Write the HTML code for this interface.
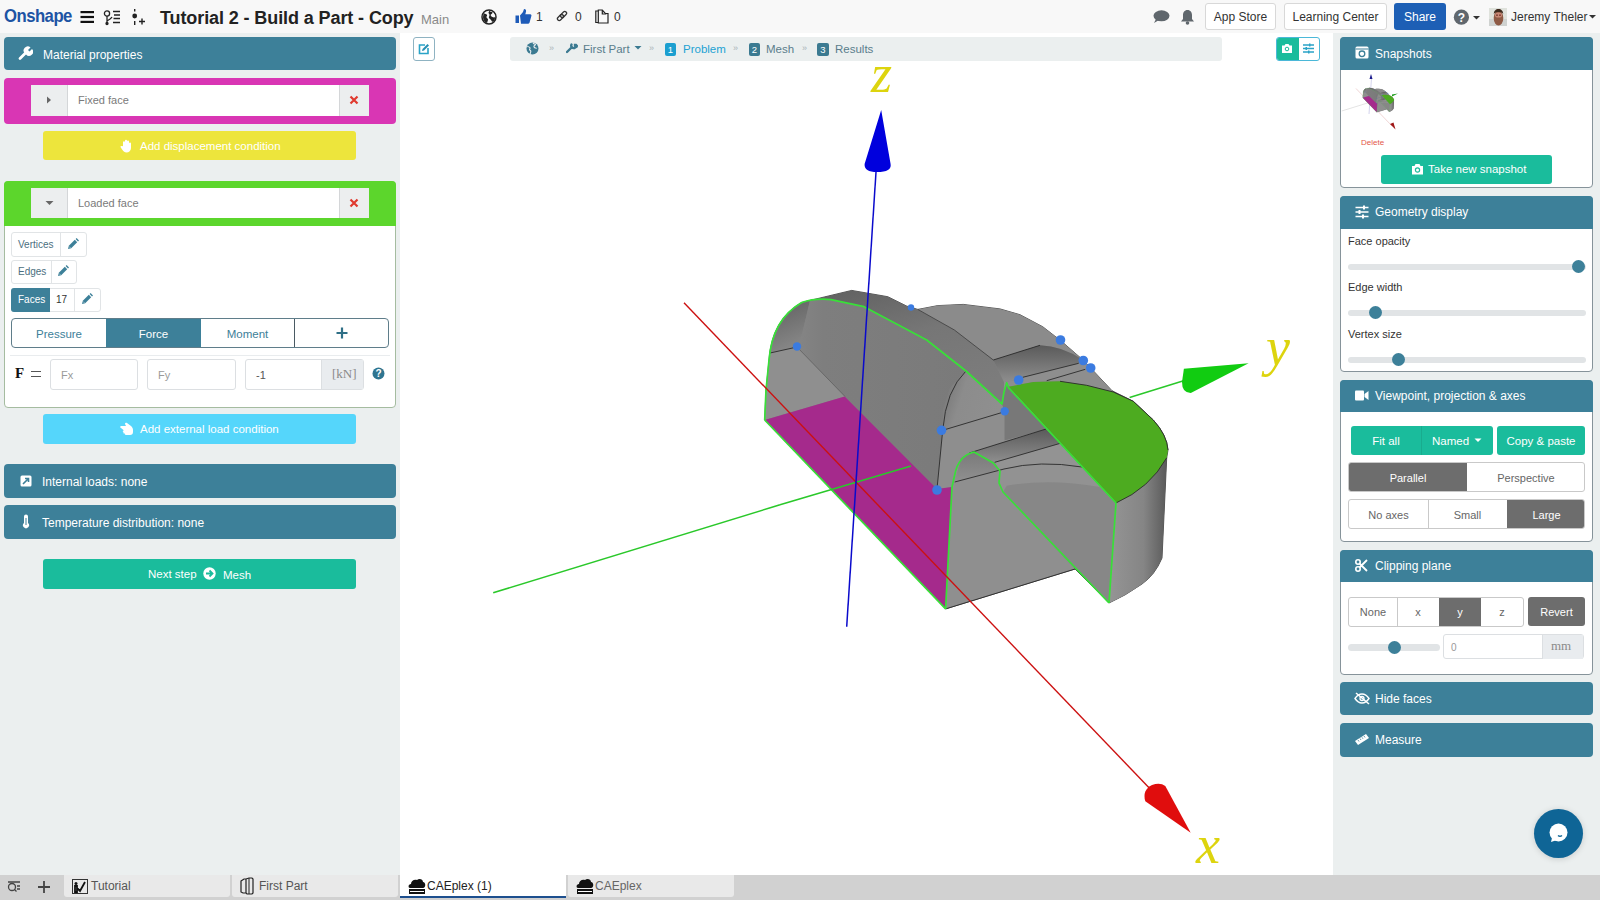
<!DOCTYPE html>
<html><head><meta charset="utf-8">
<style>
*{box-sizing:border-box;margin:0;padding:0}
html,body{width:1600px;height:900px;overflow:hidden;background:#fff;font-family:"Liberation Sans",sans-serif;position:relative}
.a{position:absolute}
#hdr{left:0;top:0;width:1600px;height:33px;background:#f8f8f8}
#left{left:0;top:33px;width:400px;height:842px;background:#ebefef}
#view{left:400px;top:33px;width:933px;height:842px;background:#fff}
#right{left:1333px;top:33px;width:267px;height:842px;background:#ebefef}
#tabs{left:0;top:875px;width:1600px;height:25px;background:#d1d1d1}
.ph{position:absolute;background:#3d8099;border-radius:4px;color:#fff;font-size:12px;white-space:nowrap}
.ph .t{position:absolute;left:38px;top:10px}
.ico{position:absolute}
.btn{position:absolute;border-radius:3px;color:#fff;font-size:11.5px;text-align:center;white-space:nowrap}
.t{white-space:nowrap}
</style></head><body>
<div id="hdr" class="a"></div>
<div id="left" class="a"></div>
<div id="view" class="a"></div>
<div id="right" class="a"></div>
<div id="tabs" class="a"></div>

<!-- HEADER -->
<div class="a t" style="left:4px;top:5px;font-size:19px;font-weight:bold;color:#1d54a4;letter-spacing:-0.6px;transform:scaleX(0.88);transform-origin:0 0">Onshape</div>
<svg class="a" style="left:80px;top:10px" width="15" height="14"><rect x="0.5" y="1" width="13.5" height="2.2" fill="#111"/><rect x="0.5" y="5.9" width="13.5" height="2.2" fill="#111"/><rect x="0.5" y="10.8" width="13.5" height="2.2" fill="#111"/></svg>
<svg class="a" style="left:103px;top:9px" width="20" height="17" fill="none" stroke="#222" stroke-width="1.3"><circle cx="4" cy="4.5" r="2.6"/><path d="M4 7v7M4 12c2-1 4-2 5-4"/><circle cx="4" cy="14.5" r="1" fill="#222"/><path d="M10 2.5h7M11 6h6M10.5 9.5h6.5M10 13.5h7"/></svg>
<svg class="a" style="left:131px;top:9px" width="16" height="17"><rect x="3" y="0" width="1.4" height="2.5" fill="#222"/><rect x="3" y="12" width="1.4" height="4" fill="#222"/><circle cx="3.7" cy="7" r="2.4" fill="#222"/><path d="M8 12.5h6M11 9.5v6" stroke="#222" stroke-width="1.4"/></svg>
<div class="a t" style="left:160px;top:8px;font-size:18px;font-weight:bold;color:#222;letter-spacing:-0.1px">Tutorial 2 - Build a Part - Copy</div>
<div class="a t" style="left:421px;top:12px;font-size:13px;color:#8a8a8a">Main</div>
<svg class="a" style="left:481px;top:9px" width="16" height="16"><circle cx="8" cy="8" r="7" fill="none" stroke="#222" stroke-width="1.5"/><path d="M2.5 4.5c1.5 0 3 .5 3.5 1.5s-1 1.5-.5 2.5 1.5 1 1.5 2-.5 2-1 3.5L4 13c-1-1-2-3-2-5zM8.5 1.5c.5 1 1.5 1.5 2.5 1.5s.5 1.5-.5 2-1 1-.5 2 2 1 3 1.5c.5-.5 1 0 1 0 0 2-.5 3-1.5 4s-2-.5-2.5-1.5-1.5-1-2-2 .5-2 .5-3-1-1.5-1-2.5z" fill="#222"/></svg>
<svg class="a" style="left:515px;top:9px" width="17" height="15"><path d="M0.5 6.5h3.5v7.5h-3.5zM5 6.5l3-3.5 1-3c2 0 2.5 1.5 1.8 3.5l-0.5 1.8h5c1 0 1.5 1 1 2l-1.8 6.5c-0.3 0.7-0.8 1-1.5 1h-7z" fill="#1e5bb8"/></svg>
<div class="a t" style="left:536px;top:10px;font-size:12px;color:#333">1</div>
<svg class="a" style="left:556px;top:10px" width="12" height="12" fill="none" stroke="#333" stroke-width="1.3"><rect x="0.3" y="4.2" width="7" height="3.6" rx="1.8" transform="rotate(-45 6 6)"/><rect x="4.7" y="4.2" width="7" height="3.6" rx="1.8" transform="rotate(-45 6 6)"/></svg>
<div class="a t" style="left:575px;top:10px;font-size:12px;color:#333">0</div>
<svg class="a" style="left:595px;top:9px" width="14" height="15" fill="none" stroke="#222" stroke-width="1.2"><path d="M0.8 13.5V2h2.5v11.5zM3.3 1h4l3 3.5H13V14H3.3z"/><path d="M7.3 1v4h4"/></svg>
<div class="a t" style="left:614px;top:10px;font-size:12px;color:#333">0</div>

<svg class="a" style="left:1153px;top:10px" width="17" height="14"><ellipse cx="8.5" cy="5.8" rx="8" ry="5.5" fill="#60676d"/><path d="M3 9l-2 4 5-3z" fill="#60676d"/></svg>
<svg class="a" style="left:1180px;top:9px" width="15" height="16"><path d="M7.5 1c-3 0-4.5 2.5-4.5 5v4l-2 2.5h13L12 10V6c0-2.5-1.5-5-4.5-5z" fill="#60676d"/><circle cx="7.5" cy="14" r="1.8" fill="#60676d"/></svg>
<div class="a t" style="left:1205px;top:3px;width:71px;height:27px;border:1px solid #d8d8d8;border-radius:3px;background:#fff;font-size:12px;color:#333;text-align:center;line-height:27px">App Store</div>
<div class="a t" style="left:1284px;top:3px;width:103px;height:27px;border:1px solid #d8d8d8;border-radius:3px;background:#fff;font-size:12px;color:#333;text-align:center;line-height:27px">Learning Center</div>
<div class="a t" style="left:1394px;top:3px;width:52px;height:27px;border-radius:3px;background:#1d5fb5;font-size:12px;color:#fff;text-align:center;line-height:28px">Share</div>
<svg class="a" style="left:1453px;top:9px" width="30" height="17"><circle cx="8.4" cy="8.2" r="7.6" fill="#60676d"/><text x="8.4" y="12.5" font-size="12" font-weight="bold" fill="#fff" text-anchor="middle" font-family="Liberation Sans">?</text><path d="M20 7h7l-3.5 3.5z" fill="#333"/></svg>
<svg class="a" style="left:1489px;top:8px" width="18" height="18"><rect width="18" height="18" fill="#dfe2dc"/><rect y="11" width="18" height="7" fill="#cfd2d0"/><ellipse cx="9.5" cy="10" rx="4.8" ry="7.5" fill="#8e5a45"/><path d="M4.8 6c0-3 2-5 4.7-5s4.7 2 4.7 5c-1-1.5-2.5-2-4.7-2S5.8 4.5 4.8 6z" fill="#3e2a1e"/><ellipse cx="9.5" cy="7" rx="3.6" ry="2.6" fill="#c98a78"/><circle cx="8" cy="7.2" r="0.9" fill="#7a3a30"/><circle cx="11" cy="7.2" r="0.9" fill="#7a3a30"/></svg>
<div class="a t" style="left:1511px;top:10px;font-size:12px;color:#333">Jeremy Theler</div>
<svg class="a" style="left:1588px;top:14px" width="10" height="6"><path d="M1 1h7l-3.5 3.5z" fill="#333"/></svg>


<!-- LEFT PANEL -->
<div class="ph" style="left:4px;top:37px;width:392px;height:33px"><svg class="ico" style="left:14px;top:9px" width="15" height="15"><path d="M2 12.5l6.5-6.5" stroke="#fff" stroke-width="2.8" stroke-linecap="round"/><path d="M7 7.5a4 4 0 0 1 5.5-6l-2.5 2.5 1.5 1.5 2.5-2.5a4 4 0 0 1-6 5.5z" fill="#fff"/></svg><span class="t" style="position:absolute;left:39px;top:11px">Material properties</span></div>

<div class="a" style="left:4px;top:78px;width:392px;height:46px;background:#d936b4;border-radius:4px"></div>
<div class="a" style="left:31px;top:85px;width:338px;height:31px;background:#fff;border-radius:2px"></div>
<div class="a" style="left:31px;top:85px;width:37px;height:31px;background:#eceeef;border-right:1px solid #d4d6d8"></div>
<svg class="a" style="left:46px;top:96px" width="6" height="8"><path d="M1 0.5v7l4-3.5z" fill="#666"/></svg>
<div class="a t" style="left:78px;top:94px;font-size:11px;color:#7a7a7a">Fixed face</div>
<div class="a" style="left:339px;top:85px;width:30px;height:31px;background:#eceeef;border-left:1px solid #d4d6d8"></div>
<svg class="a" style="left:349px;top:95px" width="10" height="10"><path d="M1.5 1.5l7 7M8.5 1.5l-7 7" stroke="#e03a2f" stroke-width="2.2"/></svg>

<div class="btn" style="left:43px;top:131px;width:313px;height:29px;background:#ede53c;line-height:29px"><svg style="position:absolute;left:77px;top:8px" width="12" height="14"><path d="M3 7V3.2a1 1 0 0 1 2 0V6V1.8a1 1 0 0 1 2 0V6V2.5a1 1 0 0 1 2 0V6.5V4.5a1 1 0 0 1 2 0V9c0 2.5-2 4.5-4.5 4.5-1.8 0-3-1-4-2.5L.6 8.2c-.5-.8.6-1.8 1.4-1z" fill="#fff"/></svg><span style="position:absolute;left:97px;top:1px">Add displacement condition</span></div>

<div class="a" style="left:4px;top:181px;width:392px;height:227px;background:#fff;border:1px solid #a5bca0;border-radius:4px"></div>
<div class="a" style="left:4px;top:181px;width:392px;height:45px;background:#5cd62c;border-radius:4px 4px 0 0"></div>
<div class="a" style="left:31px;top:188px;width:338px;height:30px;background:#fff;border-radius:2px"></div>
<div class="a" style="left:31px;top:188px;width:37px;height:30px;background:#eceeef;border-right:1px solid #d4d6d8"></div>
<svg class="a" style="left:45px;top:200px" width="9" height="6"><path d="M0.5 1h8l-4 4z" fill="#666"/></svg>
<div class="a t" style="left:78px;top:197px;font-size:11px;color:#7a7a7a">Loaded face</div>
<div class="a" style="left:339px;top:188px;width:30px;height:30px;background:#eceeef;border-left:1px solid #d4d6d8"></div>
<svg class="a" style="left:349px;top:198px" width="10" height="10"><path d="M1.5 1.5l7 7M8.5 1.5l-7 7" stroke="#e03a2f" stroke-width="2.2"/></svg>

<div class="a" style="left:11px;top:232px;width:76px;height:25px;border:1px solid #e1e4e6;border-radius:3px;background:#fff"></div>
<div class="a" style="left:60px;top:232px;width:1px;height:25px;background:#e1e4e6"></div>
<div class="a t" style="left:18px;top:239px;font-size:10px;color:#4c6f80">Vertices</div>
<svg class="a pen" style="left:67px;top:238px" width="12" height="12"><path d="M1 11l.8-3.2 6-6 2.4 2.4-6 6z" fill="#3d8099"/><path d="M8.6 1l1-1 2.4 2.4-1 1z" fill="#3d8099"/><path d="M2.2 8.6l1.2 1.2" stroke="#fff" stroke-width="0.6"/></svg>
<div class="a" style="left:11px;top:260px;width:66px;height:24px;border:1px solid #e1e4e6;border-radius:3px;background:#fff"></div>
<div class="a" style="left:51px;top:260px;width:1px;height:24px;background:#e1e4e6"></div>
<div class="a t" style="left:18px;top:266px;font-size:10px;color:#4c6f80">Edges</div>
<svg class="a" style="left:57px;top:265px" width="12" height="12"><path d="M1 11l.8-3.2 6-6 2.4 2.4-6 6z" fill="#3d8099"/><path d="M8.6 1l1-1 2.4 2.4-1 1z" fill="#3d8099"/><path d="M2.2 8.6l1.2 1.2" stroke="#fff" stroke-width="0.6"/></svg>
<div class="a" style="left:11px;top:288px;width:90px;height:24px;border:1px solid #e1e4e6;border-radius:3px;background:#fff"></div>
<div class="a" style="left:11px;top:288px;width:39px;height:24px;background:#3d8099;border-radius:3px 0 0 3px"></div>
<div class="a" style="left:74px;top:288px;width:1px;height:24px;background:#e1e4e6"></div>
<div class="a t" style="left:18px;top:294px;font-size:10px;color:#fff">Faces</div>
<div class="a t" style="left:56px;top:294px;font-size:10px;color:#333">17</div>
<svg class="a" style="left:81px;top:293px" width="12" height="12"><path d="M1 11l.8-3.2 6-6 2.4 2.4-6 6z" fill="#3d8099"/><path d="M8.6 1l1-1 2.4 2.4-1 1z" fill="#3d8099"/><path d="M2.2 8.6l1.2 1.2" stroke="#fff" stroke-width="0.6"/></svg>

<div class="a" style="left:11px;top:318px;width:378px;height:30px;border:1px solid #5f7d8a;border-radius:4px;background:#fff;overflow:hidden">
 <div class="a" style="left:94px;top:0;width:95px;height:28px;background:#3d8099"></div>
 <div class="a" style="left:282px;top:0;width:1px;height:28px;background:#4a5a63"></div>
 <div class="a t" style="left:0;top:8.5px;width:94px;text-align:center;font-size:11.5px;color:#3d8099">Pressure</div>
 <div class="a t" style="left:94px;top:8.5px;width:95px;text-align:center;font-size:11.5px;color:#fff">Force</div>
 <div class="a t" style="left:189px;top:8.5px;width:93px;text-align:center;font-size:11.5px;color:#3d8099">Moment</div>
 <svg class="a" style="left:324px;top:8px" width="12" height="12"><path d="M6 0.5v11M0.5 6h11" stroke="#2f6f86" stroke-width="2.2"/></svg>
</div>
<div class="a" style="left:10px;top:355px;width:380px;height:1px;background:#e9ecee"></div>
<div class="a t" style="left:15px;top:365px;font-family:'Liberation Serif',serif;font-weight:bold;font-size:15px;color:#111">F</div>
<div class="a" style="left:31px;top:371px;width:10px;height:1.3px;background:#555"></div><div class="a" style="left:31px;top:376px;width:10px;height:1.3px;background:#555"></div>
<div class="a" style="left:50px;top:359px;width:88px;height:31px;border:1px solid #dcdfe2;border-radius:3px;background:#fff"></div>
<div class="a t" style="left:61px;top:369px;font-size:11px;color:#9a9a9a">Fx</div>
<div class="a" style="left:147px;top:359px;width:89px;height:31px;border:1px solid #dcdfe2;border-radius:3px;background:#fff"></div>
<div class="a t" style="left:158px;top:369px;font-size:11px;color:#9a9a9a">Fy</div>
<div class="a" style="left:245px;top:359px;width:119px;height:31px;border:1px solid #dcdfe2;border-radius:3px;background:#fff"></div>
<div class="a" style="left:321px;top:360px;width:42px;height:29px;background:#e9ecef;border-left:1px solid #dcdfe2"></div>
<div class="a t" style="left:256px;top:369px;font-size:11px;color:#555">-1</div>
<div class="a t" style="left:332px;top:366px;font-family:'Liberation Serif',serif;font-size:13px;color:#8a8a8a">[kN]</div>
<svg class="a" style="left:372px;top:367px" width="13" height="13"><circle cx="6.5" cy="6.5" r="6" fill="#2f7590"/><text x="6.5" y="10.3" font-size="10" font-weight="bold" fill="#fff" text-anchor="middle" font-family="Liberation Sans">?</text></svg>

<div class="btn" style="left:43px;top:414px;width:313px;height:30px;background:#55d6fb;line-height:30px"><svg style="position:absolute;left:77px;top:8px" width="14" height="13"><path d="M1 4h5l-1-2c0-1 1-1.5 2-1l4 3c1 1 2 2 2 4v2c0 2-1 3-3 3H6c-1 0-1.5-1-1-1.5H4c-1 0-1-1.5 0-1.5H3.5c-1 0-1-1.5 0-1.5H4L1 6c-1 0-1-2 0-2z" fill="#fff"/></svg><span style="position:absolute;left:97px;top:0">Add external load condition</span></div>

<div class="ph" style="left:4px;top:464px;width:392px;height:34px"><svg class="ico" style="left:16px;top:11px" width="12" height="12"><rect x="0.5" y="0.5" width="11" height="11" rx="1.5" fill="#fff"/><path d="M3 9l5-5M5 3.5h3.5V7" stroke="#3d8099" stroke-width="1.6" fill="none"/></svg><span class="t" style="position:absolute;left:38px;top:11px">Internal loads: none</span></div>
<div class="ph" style="left:4px;top:505px;width:392px;height:34px"><svg class="ico" style="left:18px;top:9px" width="8" height="15"><path d="M2 2.5a2 2 0 0 1 4 0V9a3 3 0 1 1-4 0z" fill="#fff"/><path d="M4 4v7" stroke="#3d8099" stroke-width="1"/></svg><span class="t" style="position:absolute;left:38px;top:11px">Temperature distribution: none</span></div>

<div class="btn" style="left:43px;top:559px;width:313px;height:30px;background:#1abc9c;line-height:30px"><span style="position:absolute;left:105px;top:0">Next step</span><svg style="position:absolute;left:160px;top:8px" width="13" height="13"><circle cx="6.5" cy="6.5" r="6.2" fill="#fff"/><path d="M3 6.5h6M6.5 3.5l3 3-3 3" stroke="#1abc9c" stroke-width="1.8" fill="none"/></svg><span style="position:absolute;left:180px;top:1px">Mesh</span></div>


<!-- 3D VIEW -->
<svg class="a" style="left:400px;top:33px" width="933" height="842" viewBox="400 33 933 842">
<defs>
 <linearGradient id="gTop" x1="0" y1="0" x2="0.4" y2="1"><stop offset="0" stop-color="#606060"/><stop offset="0.5" stop-color="#767676"/><stop offset="1" stop-color="#7c7c7c"/></linearGradient>
 <linearGradient id="gRoof" x1="0" y1="0" x2="1" y2="0"><stop offset="0" stop-color="#858585"/><stop offset="0.15" stop-color="#7e7e7e"/><stop offset="1" stop-color="#7a7a7a"/></linearGradient>
 <linearGradient id="gFil" x1="0" y1="0" x2="0.3" y2="1"><stop offset="0" stop-color="#5e5e5e"/><stop offset="1" stop-color="#8c8c8c"/></linearGradient>
 <linearGradient id="gStep" x1="0" y1="0" x2="0" y2="1"><stop offset="0" stop-color="#5a5a5a"/><stop offset="1" stop-color="#8e8e8e"/></linearGradient>
 <linearGradient id="gArch" x1="0" y1="0" x2="1" y2="0.3"><stop offset="0" stop-color="#707070"/><stop offset="0.4" stop-color="#8c8c8c"/><stop offset="1" stop-color="#8f8f8f"/></linearGradient>
 <linearGradient id="gCyl" x1="0" y1="0" x2="1" y2="0"><stop offset="0" stop-color="#959595"/><stop offset="0.6" stop-color="#858585"/><stop offset="1" stop-color="#5a5a5a"/></linearGradient>
 <linearGradient id="gLow" x1="0" y1="0" x2="0" y2="1"><stop offset="0" stop-color="#7a7a7a"/><stop offset="1" stop-color="#909090"/></linearGradient>
</defs>
<!-- axes behind -->
<path d="M493.2 592.8L780 504.8" stroke="#2ac82a" stroke-width="1.5"/>
<!-- model -->
<g id="mdl">
<path d="M764.7 420L766 390L769 360C771 335 780 315 801.7 302.5L810 300.4L851.7 290.4L887.8 296.7L906.7 306.1L917.8 309.4L937.8 305.6L963.3 304.4L1000 308.9L1020 314.7L1042.7 326.7L1054.7 336L1060 340L1083 360L1090.7 368L1112 390.7L1133.3 401.3L1153.3 420Q1167 435 1168 450L1166.7 458L1162 558Q1155 575 1142 584Q1125 596 1109 603L1075 569L945.6 608.9Z" fill="#808080" stroke="#333" stroke-width="0.8"/>
<path d="M810 300.4L851.7 290.4L887.8 296.7L906.7 306.1L917.8 309.4L954.4 330L993.3 360L1004 382L1002 404L966 371L926.7 340L864 306.7L831 299.6Z" fill="url(#gTop)"/>
<path d="M917.8 309.4L937.8 305.6L963.3 304.4L1000 308.9L1020 314.7L1042.7 326.7L1054.7 336L1060 340L1083 360Q1062 346 1040 345.3L993.3 360L954.4 330Z" fill="#8b8b8b"/>
<path d="M993.3 360L1040 345.3Q1062 346 1083 360L1078.7 363.3L1022.7 377.3L1018.7 380L1004 382Z" fill="url(#gStep)"/>
<path d="M1004 382L1018.7 380L1022.7 377.3L1078.7 363.3L1083 360L1090.7 368L1112 390.7L1113.3 392L1086.7 385.3L1060 381.3L1033.3 382L1008.7 386.7L1006.7 382.7L1004 392Z" fill="#8e8e8e"/>
<path d="M769 360C771 335 780 315 801.7 302.5L810 300.4Q806 318 801.7 335L797 347L770 353Z" fill="url(#gFil)"/>
<path d="M764.7 420L766 390L770 353L797 347L845 396.5Z" fill="#8f8f8f"/>
<path d="M810 300.4L831 299.6L864 306.7L926.7 340L966 371L950 388L943 410L942.7 430.3L937 489L845 396.5L797 347L801.7 335Q806 318 810 300.4Z" fill="url(#gRoof)"/>
<path d="M966 371L1002 404L1004.7 411.7L942.7 430.3L943 410L950 388Z" fill="url(#gArch)"/>
<path d="M942.7 430.3L1004.7 411.7L1004.7 440.3L1046 429L969.3 453L961 458L954.7 475L952 487L937 489Z" fill="#8e8e8e"/>
<path d="M1004.7 411.7L1002 404L1004 392L1006.7 382.7L1008.7 386.7L1046 429L1004.7 440.3Z" fill="#787878"/>
<path d="M969.3 453L1046 429L1060 443.4L994.7 462.3L974 452Z" fill="url(#gStep)"/>
<path d="M994.7 462.3L1060 443.4L1082 467L1053 464.3L1024 465L1004 469L1000 471Z" fill="#939393"/>
<path d="M1003 492L999 483L1000 471L1004 469L1024 465L1053 464.3L1082 467L1116 503L1109 603Z" fill="#929292"/>
<path d="M1006.7 485.7Q1050 478 1100 487L1116 503L1109 603L1003 492Z" fill="#878787"/>
<path d="M945.6 608.9L952 487L954.7 475L961 458L974 452L993.3 463L1000 471L999 483L1003 492L1075 569Z" fill="#8f8f8f"/>
<path d="M954.7 482L961 458L974 452L993.3 463L1000 471L1004 469Z" fill="url(#gLow)"/>
<path d="M764.7 420L844.7 396.5L937 489L952 487L945.6 608.9Z" fill="#a52a8c"/>
<path d="M1008.7 386.7L1033.3 382L1060 381.3L1086.7 385.3L1113.3 392L1133.3 401.3L1153.3 420Q1167 435 1168 450L1166.7 457.8Q1150 488 1116 503Z" fill="#4dab20"/>
<path d="M1116 503Q1150 488 1166.7 457.8L1162 558Q1155 575 1142 584Q1125 596 1109 603Z" fill="url(#gCyl)"/>
<g stroke="#2a2a2a" stroke-width="0.9" fill="none">
 <path d="M770 353L797 347"/>
 <path d="M797 347L845 396.5" stroke="#555" stroke-width="0.6"/>
 <path d="M966 371Q946 390 942.7 430.3L937 489"/>
 <path d="M942.7 430.3L1004.7 411.7"/>
 <path d="M969.3 453L1046 429"/>
 <path d="M994.7 462.3L1060 443.4"/>
 <path d="M954.7 482L1004 469"/>
 <path d="M1004 469Q1040 460 1082 467"/>
 <path d="M993.3 360L1040 345.3"/>
 <path d="M917.8 309.4L954.4 330L993.3 360" stroke="#444"/>
 <path d="M1022.7 377.3L1078.7 363.3"/>
 <path d="M1046.7 380.7L1085.3 369.3"/>
 <path d="M1060 381.3L1086.7 385.3L1113.3 392L1133.3 401.3L1153.3 420Q1167 435 1168 450"/>
 <path d="M1116 503Q1150 488 1166.7 457.8"/>
 <path d="M945.6 608.9L1075 569"/>
</g>
<g stroke="#38e038" stroke-width="1.7" fill="none" stroke-linejoin="round">
 <path d="M764.7 420L766 390L769 360C771 335 780 315 801.7 302.5Q815 298 831 299.6L864 306.7L926.7 340L966 371L1002 404L1004 392L1006.7 382.7L1008.7 388L1116 503L1109 603"/>
 <path d="M764.7 420L945.6 608.9"/>
 <path d="M945.6 608.9L952 487L954.7 475Q958 456 974 452L993.3 463L1000 471L999 483L1003 492L1109 603"/>
</g>
<g fill="#3b7be0">
 <circle cx="797" cy="346.5" r="4.2"/><circle cx="911" cy="307.5" r="3.2"/><circle cx="1060.5" cy="340" r="4.8"/><circle cx="1083.3" cy="360.5" r="4.8"/><circle cx="1090.7" cy="368" r="4.8"/><circle cx="1018.7" cy="380" r="4.8"/><circle cx="1004.7" cy="411.3" r="4.2"/><circle cx="941.5" cy="430.3" r="4.8"/><circle cx="937" cy="490" r="4.8"/>
</g>
</g>
<!-- axes front -->
<path d="M780 504.8L911 466" stroke="#2ac82a" stroke-width="1.5"/>
<path d="M1129.6 397.5L1186 380" stroke="#2ac82a" stroke-width="1.5"/>
<path d="M1183.9 368.8L1248.6 363.3L1190.8 392.9Q1182 393 1182 382Z" fill="#11cc11"/>
<path d="M684 302.7L1155 794" stroke="#cc1111" stroke-width="1.4"/>
<path d="M1165.3 786L1190.7 832.7L1145.3 801.3Q1142 790 1152 785Q1160 782 1165.3 786Z" fill="#e00d0d"/>
<path d="M846.7 626.7L876 172" stroke="#0a0acc" stroke-width="1.5"/>
<path d="M881.2 110L890.6 164Q892 172 877 172Q864 172 864.6 164Z" fill="#0000dd"/>
<text x="871" y="92" font-family="Liberation Serif" font-style="italic" font-size="54" fill="#ddd40e">z</text>
<text x="1266" y="365" font-family="Liberation Serif" font-style="italic" font-size="54" fill="#ddd40e">y</text>
<text x="1196" y="863" font-family="Liberation Serif" font-style="italic" font-size="54" fill="#ddd40e">x</text>
</svg>

<!-- VIEW OVERLAYS -->
<div class="a" style="left:413px;top:37px;width:22px;height:24px;border:1px solid #8fb3c2;border-radius:3px;background:#fff"></div>
<svg class="a" style="left:417px;top:42px" width="14" height="14"><path d="M8 3H2.5v8.5H11V6" fill="none" stroke="#2aa3c7" stroke-width="1.6"/><path d="M5 9l0.5-2 5-5 1.5 1.5-5 5z" fill="#2890b4"/></svg>
<div class="a" style="left:510px;top:37px;width:712px;height:24px;background:#ebefef;border-radius:3px"></div>
<svg class="a" style="left:526px;top:42px" width="13" height="13"><circle cx="6.5" cy="6.5" r="6" fill="#3b7a91"/><path d="M1.2 4.5c1.2 0 2.3.5 2.8 1.3s-.8 1.2-.4 2 1.2.8 1.2 1.6-.4 1.6-.8 2.8M7 .8c.4.8 1.2 1.2 2 1.2s.4 1.2-.4 1.6-.8.8-.4 1.6 1.6.8 2.4 1.2" stroke="#ebeef0" stroke-width="1.1" fill="none"/></svg>
<div class="a t" style="left:549px;top:43px;font-size:9px;color:#aab4b9">&raquo;</div>
<svg class="a" style="left:566px;top:43px" width="12" height="11"><path d="M1 9l5-5M5.5 1.5a2.5 2.5 0 0 0 3 3.5l1.5-1-1-1 0-1 1 0 1 1" stroke="#3b7a91" stroke-width="2.4" fill="none" stroke-linecap="round"/></svg>
<div class="a t" style="left:583px;top:43px;font-size:11.5px;color:#5a7d8c">First Part</div>
<svg class="a" style="left:634px;top:45px" width="9" height="6"><path d="M0.5 1h7l-3.5 3.5z" fill="#3b7a91"/></svg>
<div class="a t" style="left:649px;top:43px;font-size:9px;color:#aab4b9">&raquo;</div>
<div class="a t" style="left:665px;top:43px;width:11px;height:13px;background:#1b9fd0;border-radius:2px;color:#fff;font-size:9.5px;text-align:center;line-height:13px">1</div>
<div class="a t" style="left:683px;top:43px;font-size:11.5px;color:#22a2d3">Problem</div>
<div class="a t" style="left:733px;top:43px;font-size:9px;color:#aab4b9">&raquo;</div>
<div class="a t" style="left:749px;top:43px;width:11px;height:13px;background:#3b7a91;border-radius:2px;color:#fff;font-size:9.5px;text-align:center;line-height:13px">2</div>
<div class="a t" style="left:766px;top:43px;font-size:11.5px;color:#5a7d8c">Mesh</div>
<div class="a t" style="left:802px;top:43px;font-size:9px;color:#aab4b9">&raquo;</div>
<div class="a t" style="left:817px;top:43px;width:12px;height:13px;background:#3b7a91;border-radius:2px;color:#fff;font-size:9.5px;text-align:center;line-height:13px">3</div>
<div class="a t" style="left:835px;top:43px;font-size:11.5px;color:#5a7d8c">Results</div>

<div class="a" style="left:1276px;top:37px;width:44px;height:24px;border:1px solid #4bb8d8;border-radius:3px;background:#fff;overflow:hidden"><div class="a" style="left:0;top:0;width:22px;height:22px;background:#1abc9c"></div></div>
<svg class="a" style="left:1281px;top:43px" width="12" height="11"><path d="M1 2.5h2.5l1-1.5h3l1 1.5H11v7.5H1z" fill="#fff"/><circle cx="6" cy="6" r="1.8" fill="none" stroke="#1abc9c" stroke-width="1"/></svg>
<svg class="a" style="left:1302px;top:43px" width="13" height="11"><path d="M1 2h11M1 5.5h11M1 9h11" stroke="#2aa3c7" stroke-width="1.3"/><rect x="7" y="0.5" width="1.5" height="3" fill="#2aa3c7"/><rect x="3.5" y="4" width="1.5" height="3" fill="#2aa3c7"/><rect x="6" y="7.5" width="1.5" height="3" fill="#2aa3c7"/></svg>

<!-- RIGHT PANEL -->
<div class="a" style="left:1340px;top:37px;width:253px;height:151px;background:#fff;border:1px solid #86939a;border-radius:4px"></div>
<div class="ph" style="left:1340px;top:37px;width:253px;height:33px;border-radius:4px 4px 0 0"><svg class="ico" style="left:15px;top:9px" width="14" height="13"><rect x="0.5" y="0.5" width="13" height="12" rx="1.5" fill="#fff"/><rect x="0.5" y="2.5" width="13" height="1" fill="#3d8099"/><circle cx="7" cy="7.8" r="2.8" fill="none" stroke="#3d8099" stroke-width="1.3"/></svg><span class="t" style="position:absolute;left:35px;top:10px">Snapshots</span></div>
<svg class="a" style="left:1341px;top:71px" width="70" height="64" viewBox="1341 71 70 64">
 <path d="M1341.7 111L1374 101" stroke="#e4e4e4" stroke-width="1"/>
 <path d="M1356 88.5L1392 126" stroke="#f0d6d6" stroke-width="1"/>
 <path d="M1369 114L1371.5 78" stroke="#d4d4ee" stroke-width="1"/>
 <g transform="translate(1303.5 65.15) scale(0.0775)"><use href="#mdl"/></g>
 <path d="M1369.5 79l1.5-5 1.5 5z" fill="#1a1a8c"/>
 <path d="M1390 124l5.5 5.5-2-7z" fill="#a01818"/>
 <path d="M1392 94.5l6-1-6 3z" fill="#1a9c1a"/>
</svg>
<div class="a t" style="left:1361px;top:138px;font-size:8px;color:#e4584a">Delete</div>
<div class="btn" style="left:1381px;top:155px;width:171px;height:29px;background:#1abc9c;line-height:29px"><svg style="position:absolute;left:30px;top:8px" width="13" height="12"><path d="M1 3h2.5l1-2h4l1 2H12v8.5H1z" fill="#fff"/><circle cx="6.5" cy="7" r="2.1" fill="none" stroke="#1abc9c" stroke-width="1.2"/></svg><span style="position:absolute;left:47px;top:0">Take new snapshot</span></div>

<div class="a" style="left:1340px;top:196px;width:253px;height:176px;background:#fff;border:1px solid #86939a;border-radius:4px"></div>
<div class="ph" style="left:1340px;top:196px;width:253px;height:33px;border-radius:4px 4px 0 0"><svg class="ico" style="left:15px;top:9px" width="14" height="14"><path d="M0.5 2.5h13M0.5 7h13M0.5 11.5h13" stroke="#fff" stroke-width="1.6"/><rect x="8" y="0.5" width="2" height="4" fill="#fff"/><rect x="3.5" y="5" width="2" height="4" fill="#fff"/><rect x="7" y="9.5" width="2" height="4" fill="#fff"/></svg><span class="t" style="position:absolute;left:35px;top:9px">Geometry display</span></div>
<div class="a t" style="left:1348px;top:235px;font-size:11px;color:#333">Face opacity</div>
<div class="a" style="left:1348px;top:264px;width:238px;height:6px;border-radius:3px;background:#e1e4e6"></div>
<div class="a" style="left:1572px;top:260px;width:13px;height:13px;border-radius:50%;background:#3d8099"></div>
<div class="a t" style="left:1348px;top:281px;font-size:11px;color:#333">Edge width</div>
<div class="a" style="left:1348px;top:310px;width:238px;height:6px;border-radius:3px;background:#e1e4e6"></div>
<div class="a" style="left:1369px;top:306px;width:13px;height:13px;border-radius:50%;background:#3d8099"></div>
<div class="a t" style="left:1348px;top:328px;font-size:11px;color:#333">Vertex size</div>
<div class="a" style="left:1348px;top:357px;width:238px;height:6px;border-radius:3px;background:#e1e4e6"></div>
<div class="a" style="left:1392px;top:353px;width:13px;height:13px;border-radius:50%;background:#3d8099"></div>

<div class="a" style="left:1340px;top:380px;width:253px;height:162px;background:#fff;border:1px solid #86939a;border-radius:4px"></div>
<div class="ph" style="left:1340px;top:380px;width:253px;height:32px;border-radius:4px 4px 0 0"><svg class="ico" style="left:15px;top:10px" width="14" height="11"><rect x="0" y="0.5" width="9" height="10" rx="1" fill="#fff"/><path d="M9.5 4l4-3v9l-4-3z" fill="#fff"/></svg><span class="t" style="position:absolute;left:35px;top:9px">Viewpoint, projection &amp; axes</span></div>
<div class="btn" style="left:1351px;top:426px;width:70px;height:29px;background:#1abc9c;line-height:30px;border-radius:3px 0 0 3px">Fit all</div>
<div class="btn" style="left:1421px;top:426px;width:72px;height:29px;background:#1abc9c;line-height:30px;border-radius:0 3px 3px 0;border-left:1px solid #19ab8e"><span style="position:absolute;left:10px">Named</span><svg style="position:absolute;left:52px;top:12px" width="8" height="5"><path d="M0.5 0.5h7l-3.5 3.5z" fill="#fff"/></svg></div>
<div class="btn" style="left:1497px;top:426px;width:88px;height:29px;background:#1abc9c;line-height:30px">Copy &amp; paste</div>
<div class="a" style="left:1348px;top:462px;width:237px;height:30px;border:1px solid #c9c9c9;border-radius:3px;background:#fff;overflow:hidden"><div class="a" style="left:0;top:0;width:118px;height:28px;background:#6d6d6d"></div>
 <div class="a t" style="left:0;top:9px;width:118px;text-align:center;font-size:11px;color:#fff">Parallel</div>
 <div class="a t" style="left:118px;top:9px;width:118px;text-align:center;font-size:11px;color:#666">Perspective</div></div>
<div class="a" style="left:1348px;top:499px;width:237px;height:30px;border:1px solid #c9c9c9;border-radius:3px;background:#fff;overflow:hidden"><div class="a" style="left:79px;top:0;width:1px;height:28px;background:#c9c9c9"></div><div class="a" style="left:158px;top:0;width:79px;height:28px;background:#6d6d6d"></div>
 <div class="a t" style="left:0;top:9px;width:79px;text-align:center;font-size:11px;color:#666">No axes</div>
 <div class="a t" style="left:79px;top:9px;width:79px;text-align:center;font-size:11px;color:#666">Small</div>
 <div class="a t" style="left:158px;top:9px;width:79px;text-align:center;font-size:11px;color:#fff">Large</div></div>

<div class="a" style="left:1340px;top:550px;width:253px;height:125px;background:#fff;border:1px solid #86939a;border-radius:4px"></div>
<div class="ph" style="left:1340px;top:550px;width:253px;height:32px;border-radius:4px 4px 0 0"><svg class="ico" style="left:15px;top:9px" width="13" height="13"><circle cx="3" cy="3" r="2.2" fill="none" stroke="#fff" stroke-width="1.6"/><circle cx="3" cy="10" r="2.2" fill="none" stroke="#fff" stroke-width="1.6"/><path d="M4.5 4.5L12 12M4.5 8.5L12 1" stroke="#fff" stroke-width="1.8"/></svg><span class="t" style="position:absolute;left:35px;top:9px">Clipping plane</span></div>
<div class="a" style="left:1348px;top:597px;width:176px;height:30px;border:1px solid #c9c9c9;border-radius:3px;background:#fff;overflow:hidden">
 <div class="a" style="left:48px;top:0;width:1px;height:28px;background:#c9c9c9"></div><div class="a" style="left:90px;top:0;width:42px;height:28px;background:#6d6d6d"></div>
 <div class="a t" style="left:0;top:8px;width:48px;text-align:center;font-size:11px;color:#666">None</div>
 <div class="a t" style="left:48px;top:8px;width:42px;text-align:center;font-size:11px;color:#666">x</div>
 <div class="a t" style="left:90px;top:8px;width:42px;text-align:center;font-size:11px;color:#fff">y</div>
 <div class="a t" style="left:132px;top:8px;width:42px;text-align:center;font-size:11px;color:#666">z</div></div>
<div class="btn" style="left:1528px;top:597px;width:57px;height:29px;background:#6d6d6d;line-height:30px;font-size:11px">Revert</div>
<div class="a" style="left:1348px;top:644px;width:92px;height:7px;border-radius:3.5px;background:#e1e4e6"></div>
<div class="a" style="left:1388px;top:641px;width:13px;height:13px;border-radius:50%;background:#3d8099"></div>
<div class="a" style="left:1443px;top:634px;width:141px;height:25px;border:1px solid #dcdfe2;border-radius:3px;background:#fff"></div>
<div class="a" style="left:1542px;top:635px;width:41px;height:24px;background:#e9ecef;border-left:1px solid #dcdfe2"></div>
<div class="a t" style="left:1451px;top:642px;font-size:10px;color:#999">0</div>
<div class="a t" style="left:1551px;top:638px;font-family:'Liberation Serif',serif;font-size:13px;color:#8a8a8a">mm</div>

<div class="ph" style="left:1340px;top:682px;width:253px;height:33px"><svg class="ico" style="left:14px;top:10px" width="16" height="13"><path d="M1 6.5c2-3 4.5-4.5 7-4.5s5 1.5 7 4.5c-2 3-4.5 4.5-7 4.5S3 9.5 1 6.5z" fill="none" stroke="#fff" stroke-width="1.4"/><circle cx="8" cy="6.5" r="2" fill="none" stroke="#fff" stroke-width="1.3"/><path d="M2 1l13 11" stroke="#fff" stroke-width="1.5"/></svg><span class="t" style="position:absolute;left:35px;top:10px">Hide faces</span></div>
<div class="ph" style="left:1340px;top:723px;width:253px;height:34px"><svg class="ico" style="left:14px;top:9px" width="16" height="13"><path d="M1 9l11-7 3 4-11 7z" fill="#fff"/><path d="M4 8l1 1.5M6 6.5l1 1.5M8 5.3l1 1.5M10 4l1 1.5" stroke="#3d8099" stroke-width="0.8"/></svg><span class="t" style="position:absolute;left:35px;top:10px">Measure</span></div>

<div class="a" style="left:1534px;top:809px;width:49px;height:49px;border-radius:50%;background:#0f6596;box-shadow:0 1px 6px rgba(0,0,0,0.15)"></div>
<svg class="a" style="left:1546px;top:820px" width="26" height="26"><circle cx="12.5" cy="12.5" r="9" fill="#fff"/><path d="M6 18l-1 4 6-2z" fill="#fff"/><path d="M12 15.5q2 1.5 4 0" stroke="#0f6596" stroke-width="1.5" fill="none"/></svg>

<!-- TABS -->
<svg class="a" style="left:7px;top:880px" width="15" height="13"><circle cx="5" cy="7" r="3.5" fill="none" stroke="#444" stroke-width="1.3"/><path d="M7.5 9.5l2 2M1 2h12M10 6h3M10 9h3" stroke="#444" stroke-width="1.3"/></svg>
<svg class="a" style="left:37px;top:880px" width="14" height="14"><path d="M7 1v12M1 7h12" stroke="#444" stroke-width="1.8"/></svg>
<div class="a" style="left:64px;top:875px;width:166px;height:22px;background:#e9e9e9;border-radius:0 0 3px 3px"></div>
<svg class="a" style="left:72px;top:879px" width="16" height="15"><rect x="0.5" y="0.5" width="15" height="14" fill="none" stroke="#333" stroke-width="1"/><path d="M3 13V7h2v6zM5 9l3 3 5-9" stroke="#111" stroke-width="1.8" fill="none"/><circle cx="4" cy="4.5" r="1.5" fill="#111"/></svg>
<div class="a t" style="left:91px;top:879px;font-size:12px;color:#555">Tutorial</div>
<div class="a" style="left:232px;top:875px;width:166px;height:22px;background:#e9e9e9;border-radius:0 0 3px 3px"></div>
<svg class="a" style="left:240px;top:877px" width="17" height="18"><path d="M1 4l3-2h2v14H3l-2-1zM6 2l3-1h3l1 1v14l-1 1H7l-1-1z" fill="none" stroke="#222" stroke-width="1.2"/><path d="M9 1v16" stroke="#222" stroke-width="1"/></svg>
<div class="a t" style="left:259px;top:879px;font-size:12px;color:#555">First Part</div>
<div class="a" style="left:400px;top:875px;width:166px;height:23px;background:#fff;border-bottom:2px solid #1d4f8e"></div>
<svg class="a" style="left:408px;top:878px" width="18" height="17"><path d="M2 10c-2 0-2-4 1-4 0-3 3-5 6-4 2-2 6-1 6 2 3 0 3 6 0 6z" fill="#111"/><rect x="1" y="11" width="16" height="5" fill="#111"/><path d="M2 13.5h14" stroke="#fff" stroke-width="1"/></svg>
<div class="a t" style="left:427px;top:879px;font-size:12px;color:#222">CAEplex (1)</div>
<div class="a" style="left:568px;top:875px;width:166px;height:22px;background:#e9e9e9;border-radius:0 0 3px 3px"></div>
<svg class="a" style="left:576px;top:878px" width="18" height="17"><path d="M2 10c-2 0-2-4 1-4 0-3 3-5 6-4 2-2 6-1 6 2 3 0 3 6 0 6z" fill="#111"/><rect x="1" y="11" width="16" height="5" fill="#111"/><path d="M2 13.5h14" stroke="#fff" stroke-width="1"/></svg>
<div class="a t" style="left:595px;top:879px;font-size:12px;color:#666">CAEplex</div>
</body></html>
